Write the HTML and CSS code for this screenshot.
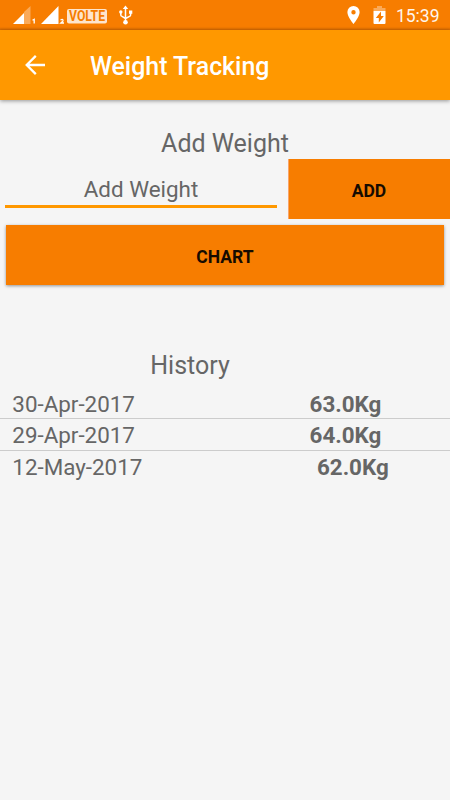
FILE: index.html
```html
<!DOCTYPE html>
<html lang="en">
<head>
<meta charset="utf-8">
<title>Weight Tracking</title>
<link rel="stylesheet" href="styles.css">
</head>
<body>
<header class="status">
  <svg class="status-left" width="140" height="30" viewBox="0 0 140 30" fill="#fff">
    <path d="M24 12 30.500 6V24H24Z" opacity=".35"/>
    <path d="M13 24 24 13V24Z"/>
    <path d="M41 24 58.500 6V24Z"/>
    <path d="M32.500 20.300 34.200 19.300V23.500M60.500 20Q63.500 18.500 63 21L60.800 23H64" fill="none" stroke="#fff" stroke-width="1.300"/>
    <rect x="67" y="9" width="40" height="14.500" rx="2" opacity=".8"/>
    <text class="volte" x="69" y="21" textLength="36" lengthAdjust="spacingAndGlyphs">VOLTE</text>
    <path d="M125.500 5.500 128.200 9H122.800Z"/>
    <circle cx="125.500" cy="22.200" r="2.300"/>
    <circle cx="120.800" cy="12" r="1.700"/>
    <path d="M129 10.500h3.300v3.300H129z"/>
    <path d="M125.500 8V22M120.800 12V15Q120.800 16 122 16.400L125.500 18.500M130.600 13V15Q130.600 16 129.500 16.400L125.500 18.500" fill="none" stroke="#fff" stroke-width="1.500"/>
  </svg>
  <div class="status-right">
    <svg class="pin" width="13" height="18" viewBox="0 0 13 18" fill="#fff"><path fill-rule="evenodd" d="M6.500 0A6.100 6.100 0 0 0 .4 6.200C.4 10.800 6.500 18 6.500 18S12.600 10.800 12.600 6.200A6.100 6.100 0 0 0 6.500 0ZM6.500 4a2.200 2.200 0 1 1 0 4.400 2.200 2.200 0 0 1 0-4.400Z"/></svg>
    <svg class="battery" width="13" height="18" viewBox="0 0 13 18" fill="#fff"><path opacity=".35" d="M.5 2H4V0h5v2h3.500v3H.5Z"/><path fill-rule="evenodd" d="M.5 5h12v12q0 1-1 1h-10q-1 0-1-1ZM8 5.500 2.800 12h3v4.500L10.800 10H8Z"/></svg>
    <span class="clock">15:39</span>
  </div>
</header>
<div class="toolbar">
  <svg class="back" width="20" height="20" viewBox="0 0 20 20" fill="none" stroke="#fff" stroke-width="2.300"><path d="M20 10H2M10.800 .9 1.700 10 10.800 19.100"/></svg>
  <h1>Weight Tracking</h1>
</div>
<main>
  <h2 class="add-title">Add Weight</h2>
  <div class="entry">
    <div class="field">Add Weight</div>
    <div class="button add">ADD</div>
  </div>
  <div class="button chart">CHART</div>
  <h2 class="history-title">History</h2>
  <ul class="history">
    <li><span>30-Apr-2017</span><b>63.0Kg</b></li>
    <li><span>29-Apr-2017</span><b>64.0Kg</b></li>
    <li><span>12-May-2017</span><b>62.0Kg</b></li>
  </ul>
</main>
</body>
</html>
```
FILE: styles.css
```css
* { box-sizing: border-box; }
body {
  margin: 0;
  height: 800px;
  overflow: hidden;
  background: #f5f5f5;
  color: #666;
  font-family: Roboto, sans-serif;
}
h1, h2, ul { margin: 0; padding: 0; font-weight: 400; }
.status {
  height: 30px;
  display: flex;
  justify-content: space-between;
  background: linear-gradient(#f77d00 27px, #d96b00 30px);
}
.volte { font: 700 14px Roboto, sans-serif; fill: #f57c00; }
.status-right { display: flex; padding-right: 10.500px; color: #fff; }
.pin { margin: 6px 13px 0 0; }
.battery { margin: 6px 10px 0 0; }
.clock { font-size: 17.500px; line-height: 32px; opacity: .93; }
.toolbar {
  height: 70px;
  display: flex;
  align-items: center;
  padding-left: 25px;
  background: #ff9800;
  box-shadow: 0 1px 4px rgba(0, 0, 0, .4);
}
.toolbar h1 {
  margin: 3px 0 0 45px;
  color: #fff;
  font-size: 24.900px;
  font-weight: 500;
  line-height: 31px;
}
h2 { font-size: 25px; line-height: 30px; text-align: center; }
.add-title { padding-top: 29px; height: 58px; }
.entry { display: flex; height: 61px; padding: 1px 0 0 5px; justify-content: space-between; }
.field {
  width: 272px;
  height: 49px;
  border-bottom: 3px solid #ff9800;
  font-size: 22.400px;
  line-height: 60px;
  text-align: center;
}
.button {
  height: 60px;
  background: #f77d00;
  color: #160b00;
  font-size: 17.500px;
  font-weight: 700;
  line-height: 65px;
  text-align: center;
}
.add { width: 162px; padding-right: 1px; border-left: 1px solid #f9a468; line-height: 64px; }
.chart { margin: 6px 6px 0; box-shadow: 0 1px 3px rgba(0, 0, 0, .4); }
.history-title { margin-top: 66px; padding-right: 70px; }
.history { list-style: none; margin-top: 6px; font-size: 22.400px; }
.history li { height: 32px; padding-left: 12.300px; display: flex; gap: 174.600px; line-height: 33px; border-bottom: 1px solid #ccc; }
.history li:first-child { line-height: 35px; }
.history li:last-child { border: 0; }
```
